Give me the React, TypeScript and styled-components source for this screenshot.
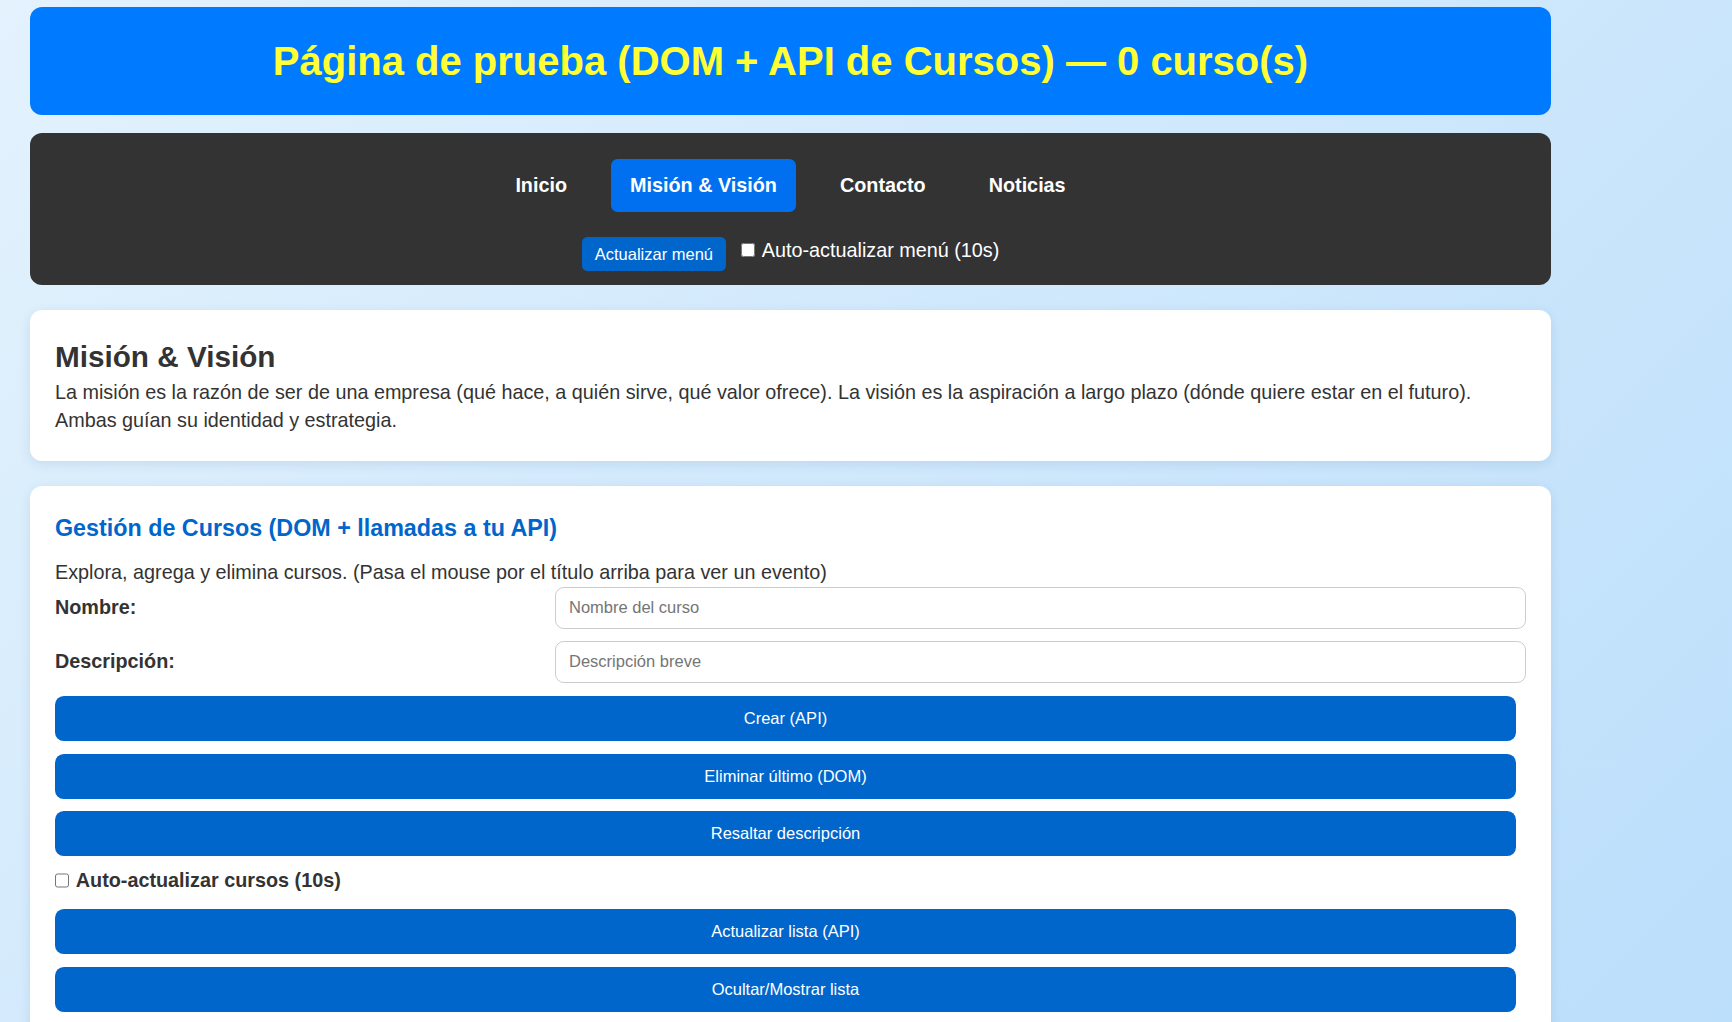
import React from "react";
import styled, { createGlobalStyle } from "styled-components";

const GlobalStyle = createGlobalStyle`
  html, body {
    margin: 0;
    padding: 0;
  }
  body {
    font-family: "Liberation Sans", Arial, sans-serif;
    color: #333;
  }
  * { box-sizing: border-box; }
`;

const Page = styled.div`
  min-height: 100vh;
  background: linear-gradient(135deg, #e3f2fd 0%, #bbdefb 100%);
  padding: 7px 0 0 30px;
  overflow: hidden;
`;

const Container = styled.div`
  width: 1521px;
  display: flex;
  flex-direction: column;
`;

const Header = styled.header`
  height: 108px;
  background: #007bff;
  border-radius: 12px;
  display: flex;
  align-items: center;
  justify-content: center;
`;

const Title = styled.h1`
  margin: 0;
  font-size: 40px;
  font-weight: 700;
  color: #ffff33;
  line-height: normal;
`;

const Nav = styled.nav`
  margin-top: 18px;
  background: #333;
  border-radius: 12px;
  padding: 25.5px 0 14px;
  display: flex;
  flex-direction: column;
  align-items: center;
  gap: 25.6px;
`;

const NavLinks = styled.div`
  display: flex;
  gap: 25px;
`;

const NavLink = styled.a<{ $active?: boolean }>`
  display: block;
  padding: 15px 19px;
  font-size: 19.8px;
  line-height: 23px;
  font-weight: 700;
  color: #fff;
  text-decoration: none;
  border-radius: 6.6px;
  background: ${(p) => (p.$active ? "#0070f0" : "transparent")};
  cursor: pointer;
`;

const ControlRow = styled.div`
  display: flex;
  align-items: center;
`;

const SmallButton = styled.button`
  background: #0066cc;
  color: #fff;
  border: none;
  border-radius: 5.5px;
  padding: 7.5px 13px;
  font-family: inherit;
  font-size: 16.5px;
  line-height: 19px;
  cursor: pointer;
`;

const CheckLabel = styled.label<{ $light?: boolean; $bold?: boolean }>`
  display: flex;
  align-items: center;
  gap: 6.5px;
  font-size: 19.8px;
  line-height: normal;
  font-weight: ${(p) => (p.$bold ? 700 : 400)};
  color: ${(p) => (p.$light ? "#fff" : "#333")};
`;

const NavCheckLabel = styled(CheckLabel)`
  margin-left: 15px;
  margin-bottom: 8px;
`;

const Checkbox = styled.input.attrs({ type: "checkbox" })`
  width: 14.3px;
  height: 14.3px;
  margin: 0;
`;

const Card = styled.section`
  margin-top: 25px;
  background: #fff;
  border-radius: 12px;
  box-shadow: 0 3px 12px rgba(0, 60, 120, 0.1);
`;

const MissionCard = styled(Card)`
  padding: 27.5px 25px 25.5px;
`;

const CoursesCard = styled(Card)`
  padding: 29px 25px 25px;
`;

const SectionTitle = styled.h2`
  margin: 2px 0 4px;
  font-size: 29.7px;
  font-weight: 700;
  color: #333;
  line-height: normal;
`;

const Paragraph = styled.p`
  margin: 0;
  font-size: 19.8px;
  line-height: 28.8px;
  color: #333;
`;

const CoursesTitle = styled.h3`
  margin: 0 0 16.5px;
  font-size: 23.3px;
  font-weight: 700;
  color: #0066cc;
  line-height: normal;
`;

const FormRow = styled.div<{ $last?: boolean }>`
  display: grid;
  grid-template-columns: 500px 1fr;
  align-items: center;
  margin-bottom: ${(p) => (p.$last ? "13.4px" : "12px")};
`;

const FieldLabel = styled.label`
  font-size: 19.8px;
  font-weight: 700;
  color: #333;
`;

const TextInput = styled.input`
  width: 100%;
  height: 42px;
  border: 1px solid #ccc;
  border-radius: 8.8px;
  padding: 0 13px;
  font-family: inherit;
  font-size: 16.5px;
  color: #333;
  background: #fff;
  &::placeholder {
    color: #757575;
  }
`;

const ActionButton = styled.button`
  display: block;
  width: calc(100% - 10px);
  height: 45px;
  margin: 0 0 12.5px;
  background: #0066cc;
  color: #fff;
  border: none;
  border-radius: 8.8px;
  font-family: inherit;
  font-size: 16.5px;
  cursor: pointer;
`;

const AutoRow = styled.div`
  margin: 9px 0 17.5px;
`;

export default function App() {
  return (
    <>
      <GlobalStyle />
      <Page>
        <Container>
          <Header>
            <Title>Página de prueba (DOM + API de Cursos) — 0 curso(s)</Title>
          </Header>

          <Nav>
            <NavLinks>
              <NavLink>Inicio</NavLink>
              <NavLink $active>Misión &amp; Visión</NavLink>
              <NavLink>Contacto</NavLink>
              <NavLink>Noticias</NavLink>
            </NavLinks>
            <ControlRow>
              <SmallButton>Actualizar menú</SmallButton>
              <NavCheckLabel $light>
                <Checkbox />
                Auto-actualizar menú (10s)
              </NavCheckLabel>
            </ControlRow>
          </Nav>

          <MissionCard>
            <SectionTitle>Misión &amp; Visión</SectionTitle>
            <Paragraph>
              La misión es la razón de ser de una empresa (qué hace, a quién sirve, qué valor
              ofrece). La visión es la aspiración a largo plazo (dónde quiere estar en el futuro).
              Ambas guían su identidad y estrategia.
            </Paragraph>
          </MissionCard>

          <CoursesCard>
            <CoursesTitle>Gestión de Cursos (DOM + llamadas a tu API)</CoursesTitle>
            <Paragraph>
              Explora, agrega y elimina cursos. (Pasa el mouse por el título arriba para ver un
              evento)
            </Paragraph>
            <FormRow>
              <FieldLabel htmlFor="nombre">Nombre:</FieldLabel>
              <TextInput id="nombre" placeholder="Nombre del curso" />
            </FormRow>
            <FormRow $last>
              <FieldLabel htmlFor="desc">Descripción:</FieldLabel>
              <TextInput id="desc" placeholder="Descripción breve" />
            </FormRow>
            <ActionButton>Crear (API)</ActionButton>
            <ActionButton>Eliminar último (DOM)</ActionButton>
            <ActionButton>Resaltar descripción</ActionButton>
            <AutoRow>
              <CheckLabel $bold>
                <Checkbox />
                Auto-actualizar cursos (10s)
              </CheckLabel>
            </AutoRow>
            <ActionButton>Actualizar lista (API)</ActionButton>
            <ActionButton>Ocultar/Mostrar lista</ActionButton>
          </CoursesCard>
        </Container>
      </Page>
    </>
  );
}
